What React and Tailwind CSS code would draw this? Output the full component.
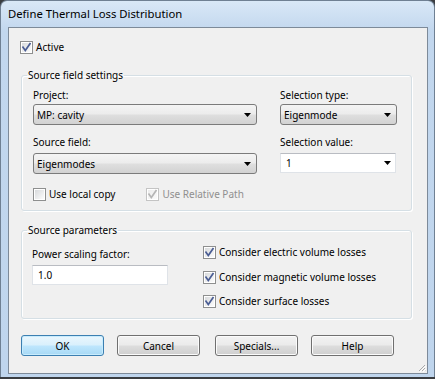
import React from "react";

const font = { fontFamily: '"Noto Sans", "Open Sans", sans-serif' };

function Check({ disabled = false, checked = true }) {
  return (
    <svg width="13" height="13" viewBox="0 0 13 13" className="shrink-0">
      <defs>
        <linearGradient id={disabled ? "cbd" : "cbg"} x1="0" y1="0" x2="1" y2="1">
          <stop offset="0" stopColor={disabled ? "#ececec" : "#d8dadc"} />
          <stop offset="1" stopColor={disabled ? "#fafafa" : "#fcfcfc"} />
        </linearGradient>
      </defs>
      <rect x="0.5" y="0.5" width="12" height="12" fill="#fff" stroke={disabled ? "#c4c4c4" : "#8e8f8f"} />
      <rect x="2" y="2" width="9" height="9" fill={`url(#${disabled ? "cbd" : "cbg"})`} />
      {checked && (
        <path
          d="M3 6.2 L5.3 9.4 L10 2.6"
          fill="none"
          stroke={disabled ? "#b5b5b5" : "#4a5d94"}
          strokeWidth="1.7"
          strokeLinecap="square"
        />
      )}
    </svg>
  );
}

function Arrow() {
  return (
    <svg width="7" height="4" viewBox="0 0 7 4" className="shrink-0">
      <path d="M0 0 H7 L3.5 4 Z" fill="#000" />
    </svg>
  );
}

function Select({ value, className = "" }) {
  return (
    <div
      className={`h-[21px] rounded-[3px] border border-[#7b7b7b] bg-[linear-gradient(#f4f4f4,#ececec_48%,#dfdfdf_52%,#d2d2d2)] flex items-center pl-[3px] pr-[5px] ${className}`}
    >
      <span className="flex-1 leading-[16px]">{value}</span>
      <Arrow />
    </div>
  );
}

function Button({ children, primary = false, className = "" }) {
  return (
    <div
      className={`w-[83px] h-[21px] rounded-[3px] border flex items-center justify-center leading-[16px] ${
        primary
          ? "border-[#3c7fb1] bg-[linear-gradient(#eaf6fd,#d9f0fc_48%,#bee6fd_52%,#a7d9f5)] shadow-[inset_0_0_0_1px_#c8ecfd]"
          : "border-[#707070] bg-[linear-gradient(#f2f2f2,#ebebeb_48%,#dddddd_52%,#cfcfcf)] shadow-[inset_0_0_0_1px_#fbfbfb]"
      } ${className}`}
    >
      {children}
    </div>
  );
}

export default function App() {
  return (
    <div className="w-[435px] h-[379px] bg-[#3a3d41] overflow-hidden text-[10px] text-black" style={font}>
      <div className="h-[377px] rounded-t-[7px] border border-b-0 border-[#6f8093] bg-[linear-gradient(#d9e8f7,#c2d7ee_30px,#bfd5ed)] flex flex-col">
        <div className="h-[26px] flex items-center pl-[7px] leading-[16px] text-[11.3px]">Define Thermal Loss Distribution</div>
        <div className="flex flex-1 pl-[7px] pr-[6px] pb-[3px]">
          <div className="flex-1 border border-[#7d8a99] bg-[#f0f0f0] flex flex-col relative">
            {/* Active */}
            <div className="mt-[12px] ml-[11px] h-[14px] flex items-center gap-[3px]">
              <Check />
              <span className="leading-[16px]">Active</span>
            </div>

            {/* Group 1 */}
            <fieldset className="mt-[13px] ml-[12px] mr-[15px] border border-[#d5dfe5] rounded-[3px] p-0 min-w-0 shadow-[inset_1px_1px_0_#fff,1px_1px_0_#fff]">
              <legend className="ml-[5px] px-[1px] leading-[16px]">Source field settings</legend>
              <div className="pl-[11px] pt-[4px] pb-[8px]">
                <div className="flex">
                  <div className="w-[224px] flex flex-col">
                    <div className="leading-[16px]">Project:</div>
                    <Select value="MP: cavity" className="mt-[1px]" />
                  </div>
                  <div className="w-[117px] ml-[23px] flex flex-col">
                    <div className="leading-[16px]">Selection type:</div>
                    <Select value="Eigenmode" className="mt-[1px]" />
                  </div>
                </div>
                <div className="flex mt-[9px]">
                  <div className="w-[224px] flex flex-col">
                    <div className="leading-[16px]">Source field:</div>
                    <Select value="Eigenmodes" className="mt-[3px]" />
                  </div>
                  <div className="w-[116px] ml-[23px] flex flex-col">
                    <div className="leading-[16px]">Selection value:</div>
                    <div className="mt-[3px] h-[20px] bg-white border border-[#dfe3e8] border-t-[#b9bcc2] flex items-center pl-[5px] pr-[4px]">
                      <span className="flex-1 leading-[16px]">1</span>
                      <Arrow />
                    </div>
                  </div>
                </div>
                <div className="mt-[12px] h-[16px] flex items-center">
                  <Check checked={false} />
                  <span className="ml-[3px] leading-[16px]">Use local copy</span>
                  <div className="ml-[31px] flex items-center">
                    <Check disabled />
                    <span className="ml-[3px] leading-[16px] text-[#8f8f8f]">Use Relative Path</span>
                  </div>
                </div>
              </div>
            </fieldset>

            {/* Group 2 */}
            <fieldset className="mt-[11px] ml-[12px] mr-[15px] border border-[#d5dfe5] rounded-[3px] p-0 min-w-0 shadow-[inset_1px_1px_0_#fff,1px_1px_0_#fff]">
              <legend className="ml-[5px] px-[1px] leading-[16px]">Source parameters</legend>
              <div className="pl-[10px] pb-[9px] flex">
                <div className="w-[136px] pt-[8px] flex flex-col">
                  <div className="leading-[16px]">Power scaling factor:</div>
                  <div className="mt-[3px] h-[20px] bg-white border border-[#dfe3e8] border-t-[#b9bcc2] flex items-center pl-[5px]">
                    <span className="leading-[16px]">1.0</span>
                  </div>
                </div>
                <div className="ml-[35px] pt-[6px] flex flex-col">
                  <div className="h-[16px] flex items-center">
                    <Check />
                    <span className="ml-[3px] leading-[16px]">Consider electric volume losses</span>
                  </div>
                  <div className="mt-[9px] h-[16px] flex items-center">
                    <Check />
                    <span className="ml-[3px] leading-[16px]">Consider magnetic volume losses</span>
                  </div>
                  <div className="mt-[8px] h-[16px] flex items-center">
                    <Check />
                    <span className="ml-[3px] leading-[16px]">Consider surface losses</span>
                  </div>
                </div>
              </div>
            </fieldset>

            {/* Buttons */}
            <div className="mt-[16px] ml-[12px] flex">
              <Button primary>OK</Button>
              <Button className="ml-[13px]">Cancel</Button>
              <Button className="ml-[15px]">Specials...</Button>
              <Button className="ml-[13px]">Help</Button>
            </div>

            {/* Resize grip */}
            <svg width="8" height="8" viewBox="0 0 8 8" className="absolute right-[1px] bottom-[1px]">
              <path d="M7 1 L1 7 M7 4 L4 7 M7 6.5 L6.5 7" stroke="#a9a9a9" strokeWidth="1" />
              <path d="M8 2 L2 8 M8 5 L5 8" stroke="#ffffff" strokeWidth="1" />
            </svg>
          </div>
        </div>
      </div>
    </div>
  );
}
